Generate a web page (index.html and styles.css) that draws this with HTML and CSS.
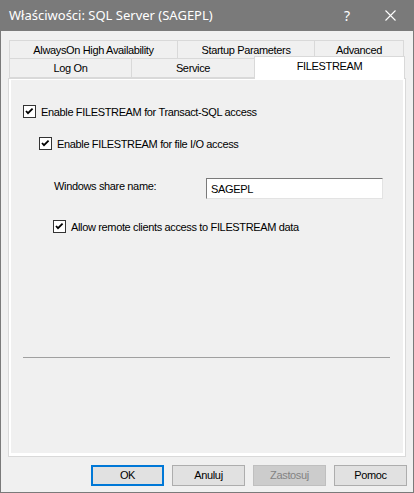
FILE: index.html
```html
<!DOCTYPE html>
<html>
<head>
<meta charset="utf-8">
<link rel="stylesheet" href="styles.css">
</head>
<body>
<div class="window">
  <div class="titlebar">
    <span class="title">Właściwości: SQL Server (SAGEPL)</span>
    <span class="help">?</span>
    <span class="close">
      <svg width="11" height="11" viewBox="0 0 11 11"><path d="M0.5 0.5 L10.5 10.5 M10.5 0.5 L0.5 10.5" stroke="#fff" stroke-width="1.1" fill="none"/></svg>
    </span>
  </div>
  <div class="content">
    <div class="tabs">
      <div class="tabrow row1">
        <div class="tab t-always">AlwaysOn High Availability</div>
        <div class="tab t-startup">Startup Parameters</div>
        <div class="tab t-adv">Advanced</div>
      </div>
      <div class="tabrow row2">
        <div class="tab t-logon">Log On</div>
        <div class="tab t-service">Service</div>
        <div class="tab t-fs selected">FILESTREAM</div>
      </div>
    </div>
    <div class="panel">
      <div class="page">
        <label class="check c1">
          <span class="box"><svg width="11" height="11" viewBox="0 0 11 11"><path d="M2 5 L4 7.2 L8.6 2.6" stroke="#000" stroke-width="1.8" fill="none"/></svg></span>
          <span>Enable FILESTREAM for Transact-SQL access</span>
        </label>
        <label class="check c2">
          <span class="box"><svg width="11" height="11" viewBox="0 0 11 11"><path d="M2 5 L4 7.2 L8.6 2.6" stroke="#000" stroke-width="1.8" fill="none"/></svg></span>
          <span>Enable FILESTREAM for file I/O access</span>
        </label>
        <div class="share">
          <span class="share-label">Windows share name:</span>
          <div class="input">SAGEPL</div>
        </div>
        <label class="check c3">
          <span class="box"><svg width="11" height="11" viewBox="0 0 11 11"><path d="M2 5 L4 7.2 L8.6 2.6" stroke="#000" stroke-width="1.8" fill="none"/></svg></span>
          <span>Allow remote clients access to FILESTREAM data</span>
        </label>
        <div class="separator"></div>
      </div>
    </div>
    <div class="buttons">
      <div class="btn default">OK</div>
      <div class="btn">Anuluj</div>
      <div class="btn disabled">Zastosuj</div>
      <div class="btn">Pomoc</div>
    </div>
  </div>
</div>
</body>
</html>
```

FILE: styles.css
```css
* { box-sizing: border-box; }
html, body { margin: 0; padding: 0; }
body {
  width: 414px;
  height: 493px;
  overflow: hidden;
  font-family: "Liberation Sans", Arial, sans-serif;
  font-size: 11px;
  letter-spacing: -0.35px;
  color: #000;
  background: #f0f0f0;
}
.window {
  width: 414px;
  height: 493px;
  border: 1px solid #7a7a7a;
  border-top: none;
  background: #f0f0f0;
  display: flex;
  flex-direction: column;
}
.titlebar {
  height: 31px;
  margin: 0 -1px;
  background: #7a7a7a;
  color: #fff;
  display: flex;
  align-items: center;
  padding-left: 9px;
  font-family: "Noto Sans", "Open Sans", sans-serif;
  font-size: 13px;
  letter-spacing: 0;
}
.title { flex: 1; padding-bottom: 1px; }
.help {
  width: 20px;
  text-align: center;
  font-size: 14px;
  margin-right: 28px;
}
.close {
  width: 11px;
  height: 11px;
  margin-right: 18px;
  display: flex;
}
.content {
  flex: 1;
  padding: 9px 6px 0 7px;
  display: flex;
  flex-direction: column;
}
.tabs {
  padding-left: 1px;
  display: flex;
  flex-direction: column;
}
.tabrow { display: flex; }
.tab {
  border: 1px solid #d9d9d9;
  background: #f0f0f0;
  text-align: center;
  white-space: nowrap;
  margin-left: -1px;
}
.tab:first-child { margin-left: 0; }
.row1 .tab { height: 19px; line-height: 19px; }
.t-always { width: 169px; }
.t-startup { width: 138px; }
.t-adv { width: 90px; }
.row2 { margin-top: -1px; align-items: flex-start; position: relative; z-index: 2; }
.row2 .tab { height: 20px; line-height: 19px; }
.t-logon { width: 123px; }
.t-service { width: 124px; }
.t-fs.selected {
  width: 151px;
  height: 23px;
  margin-top: -2px;
  background: #fff;
  border-bottom: none;
  line-height: 18px;
}
.panel {
  margin-top: -1px;
  width: 398px;
  height: 379px;
  border: 1px solid #d9d9d9;
  background: #fff;
  padding: 1px 2px 3px 2px;
  display: flex;
}
.page {
  flex: 1;
  background: #f0f0f0;
  padding: 25px 0 0 12px;
  display: flex;
  flex-direction: column;
}
.check {
  display: flex;
  align-items: center;
  height: 13px;
}
.box {
  width: 13px;
  height: 13px;
  border: 1px solid #333;
  background: #fff;
  display: flex;
  margin-right: 5px;
}
.c1 { margin-left: 0; }
.c2 { margin-left: 16px; margin-top: 19px; }
.share {
  display: flex;
  align-items: center;
  margin-top: 28px;
  margin-left: 31px;
  height: 21px;
}
.share-label { width: 152px; margin-top: -6px; }
.input {
  width: 177px;
  height: 21px;
  background: #fff;
  border: 1px solid #e3e3e3;
  border-top-color: #7a7a7a;
  border-left-color: #7a7a7a;
  padding: 3px 0 0 4px;
  line-height: 14px;
}
.c3 { margin-left: 30px; margin-top: 21px; }
.separator {
  margin-top: 124px;
  margin-left: 0;
  width: 367px;
  height: 1px;
  background: #a0a0a0;
}
.buttons {
  display: flex;
  justify-content: flex-end;
  gap: 8px;
  margin-top: 8px;
  padding-right: 0;
}
.btn {
  width: 73px;
  height: 21px;
  border: 1px solid #adadad;
  background: #e1e1e1;
  text-align: center;
  line-height: 19px;
}
.btn.default {
  border: 2px solid #0078d7;
  line-height: 17px;
}
.btn.disabled {
  background: #cccccc;
  border-color: #bfbfbf;
  color: #838383;
}
```
